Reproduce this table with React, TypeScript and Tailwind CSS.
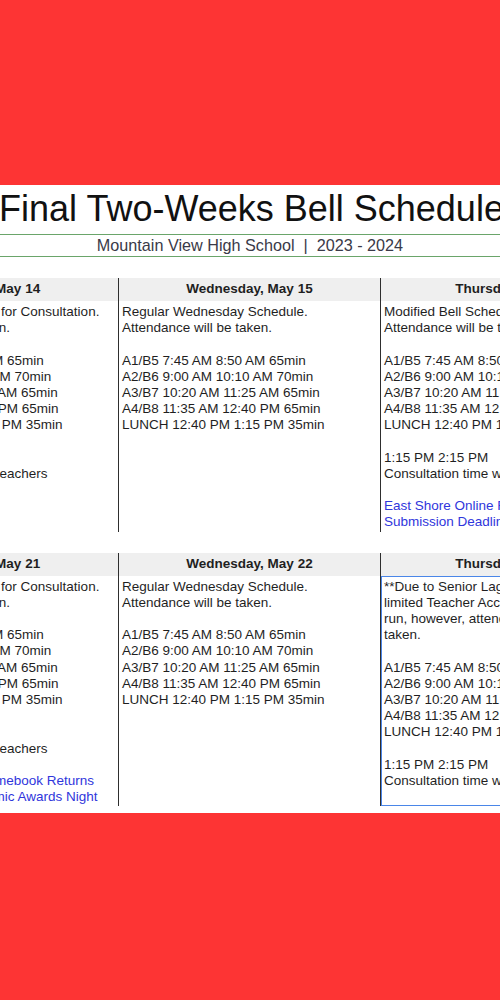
import React from "react";

type Line = { text: string; link?: boolean };

type Day = {
  label: string;
  lines: Line[];
  selected?: boolean;
};

const TIMES: Line[] = [
  { text: "A1/B5 7:45 AM 8:50 AM 65min" },
  { text: "A2/B6 9:00 AM 10:10 AM 70min" },
  { text: "A3/B7 10:20 AM 11:25 AM 65min" },
  { text: "A4/B8 11:35 AM 12:40 PM 65min" },
  { text: "LUNCH 12:40 PM 1:15 PM 35min" },
];

const BLANK: Line = { text: "" };

const consultation: Line[] = [
  { text: "Modified Bell Schedule for Consultation." },
  { text: "Attendance will be taken." },
  BLANK,
  ...TIMES,
  BLANK,
  { text: "1:15 PM 2:15 PM" },
  { text: "Consultation time with teachers" },
];

const regularWednesday: Line[] = [
  { text: "Regular Wednesday Schedule." },
  { text: "Attendance will be taken." },
  BLANK,
  ...TIMES,
];

const weeks: Day[][] = [
  [
    { label: "Tuesday, May 14", lines: consultation },
    { label: "Wednesday, May 15", lines: regularWednesday },
    {
      label: "Thursday, May 16",
      lines: [
        ...consultation,
        BLANK,
        { text: "East Shore Online Registration", link: true },
        { text: "Submission Deadline", link: true },
      ],
    },
  ],
  [
    {
      label: "Tuesday, May 21",
      lines: [
        ...consultation,
        BLANK,
        { text: "Library Book and Chromebook Returns", link: true },
        { text: "Junior & Senior Academic Awards Night", link: true },
      ],
    },
    { label: "Wednesday, May 22", lines: regularWednesday },
    {
      label: "Thursday, May 23",
      selected: true,
      lines: [
        { text: "**Due to Senior Lagoon Day, there will be" },
        { text: "limited Teacher Access. Classes will not" },
        { text: "run, however, attendance will still be" },
        { text: "taken." },
        BLANK,
        ...TIMES,
        BLANK,
        { text: "1:15 PM 2:15 PM" },
        { text: "Consultation time with teachers" },
      ],
    },
  ],
];

function DayColumn({ day }: { day: Day }) {
  return (
    <div className="w-[262px] shrink-0 flex flex-col border-r border-[#2e2e2e] overflow-hidden">
      <div className="h-[23px] bg-[#efefef] flex items-center justify-center font-bold whitespace-nowrap">
        {day.label}
      </div>
      <div
        className={
          "flex-1 px-[3px] pt-[3px] pb-[1px] " +
          (day.selected ? "outline outline-1 -outline-offset-1 outline-[#4a86e8]" : "")
        }
      >
        {day.lines.map((line, i) => (
          <div
            key={i}
            className={
              "h-[16.2px] whitespace-nowrap " + (line.link ? "text-[#2f36dc]" : "")
            }
          >
            {line.text || "\u00a0"}
          </div>
        ))}
      </div>
    </div>
  );
}

export default function App() {
  return (
    <div className="w-[500px] h-[1000px] bg-[#fd3434] overflow-hidden font-['Liberation_Sans',Arial,sans-serif]">
      <div className="mt-[185px] h-[628px] bg-white overflow-hidden pt-[6px]">
        {/* Title */}
        <h1 className="text-[36px] leading-[36px] ml-[-1px] whitespace-nowrap text-[#111]">
          Final Two-Weeks Bell Schedule
        </h1>

        {/* School / year banner */}
        <div className="mt-[7px] h-[23px] border-y border-[#6aa56a] flex items-center justify-center text-[16.2px] text-[#3a3a48] whitespace-nowrap">
          Mountain View High School&nbsp;&nbsp;|&nbsp;&nbsp;2023 - 2024
        </div>

        {/* Week tables */}
        <div className="flex flex-col gap-[21px] mt-[21px] ml-[-143px] text-[13.5px] leading-[16.2px] text-[#1f1f1f]">
          {weeks.map((week, w) => (
            <div key={w} className="flex">
              {week.map((day) => (
                <DayColumn key={day.label} day={day} />
              ))}
            </div>
          ))}
        </div>
      </div>
    </div>
  );
}
